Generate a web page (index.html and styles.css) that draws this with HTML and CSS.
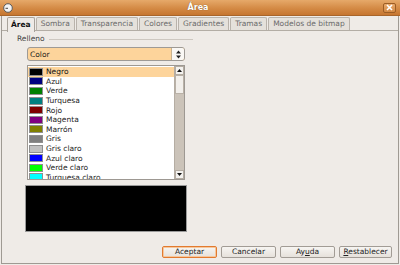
FILE: index.html
```html
<!DOCTYPE html>
<html>
<head>
<meta charset="utf-8">
<link rel="stylesheet" href="styles.css">
</head>
<body>
<div class="window">
  <div class="titlebar">
    <span class="ticon">
      <svg width="10" height="10" viewBox="0 0 10 10"><circle cx="5" cy="5" r="4.3" fill="#f4f4f4" stroke="#5a5a5a" stroke-width="1"/><path d="M2.5 5.3 L5 5.3" stroke="#444" stroke-width="1"/></svg>
    </span>
    <span class="title">Área</span>
    <span class="close">
      <svg width="7" height="7" viewBox="0 0 7 7"><path d="M1 1 L6 6 M6 1 L1 6" stroke="#fff" stroke-width="1.6"/></svg>
    </span>
  </div>
  <div class="frame">
    <div class="tabs">
      <span class="tab active">Área</span>
      <span class="tab">Sombra</span>
      <span class="tab">Transparencia</span>
      <span class="tab">Colores</span>
      <span class="tab">Gradientes</span>
      <span class="tab">Tramas</span>
      <span class="tab">Modelos de bitmap</span>
    </div>
    <div class="page">
      <div class="section-head"><span class="label">Relleno</span><span class="rule"></span></div>
      <div class="combo">
        <span class="combo-text">Color</span>
        <span class="spin">
          <svg width="5" height="9" viewBox="0 0 5 9"><path d="M2.5 0.5 L5 3.5 L0 3.5 Z M0 5.5 L5 5.5 L2.5 8.5 Z" fill="#222"/></svg>
        </span>
      </div>
      <div class="listbox">
        <div class="rows">
          <div class="row sel"><span class="sw" style="background:#000000"></span>Negro</div>
          <div class="row"><span class="sw" style="background:#000080"></span>Azul</div>
          <div class="row"><span class="sw" style="background:#008000"></span>Verde</div>
          <div class="row"><span class="sw" style="background:#008080"></span>Turquesa</div>
          <div class="row"><span class="sw" style="background:#800000"></span>Rojo</div>
          <div class="row"><span class="sw" style="background:#800080"></span>Magenta</div>
          <div class="row"><span class="sw" style="background:#808000"></span>Marrón</div>
          <div class="row"><span class="sw" style="background:#808080"></span>Gris</div>
          <div class="row"><span class="sw" style="background:#c0c0c0"></span>Gris claro</div>
          <div class="row"><span class="sw" style="background:#0000ff"></span>Azul claro</div>
          <div class="row"><span class="sw" style="background:#00ff00"></span>Verde claro</div>
          <div class="row"><span class="sw" style="background:#00ffff"></span>Turquesa claro</div>
        </div>
        <div class="scrollbar">
          <span class="sbtn"><svg width="5" height="3" viewBox="0 0 5 3"><path d="M2.5 0 L5 3 L0 3 Z" fill="#111"/></svg></span>
          <span class="thumb"></span>
          <span class="track"></span>
          <span class="sbtn"><svg width="5" height="3" viewBox="0 0 5 3"><path d="M0 0 L5 0 L2.5 3 Z" fill="#111"/></svg></span>
        </div>
      </div>
      <div class="preview"></div>
    </div>
    <div class="buttons">
      <span class="btn focus">Aceptar</span>
      <span class="btn">Cancelar</span>
      <span class="btn">Ay<u>u</u>da</span>
      <span class="btn"><u>R</u>establecer</span>
    </div>
  </div>
</div>
</body>
</html>
```

FILE: styles.css
```css
html, body {
  margin: 0;
  padding: 0;
  background: #efebe7;
}
body {
  width: 400px;
  height: 265px;
  overflow: hidden;
  font-family: "DejaVu Sans", sans-serif;
  font-size: 7.5px;
  color: #1a1a1a;
}
.window {
  width: 400px;
  height: 265px;
  display: flex;
  flex-direction: column;
}
.titlebar {
  height: 16px;
  flex: none;
  display: flex;
  align-items: center;
  background: linear-gradient(#e6a96a, #d48a45 55%, #c67630);
  border-bottom: 1px solid #a8652a;
  box-sizing: border-box;
  padding: 0 3px;
}
.ticon {
  width: 10px;
  height: 10px;
  display: flex;
}
.title {
  flex: 1;
  text-align: center;
  font-weight: bold;
  font-size: 8px;
  color: #ffffff;
  text-shadow: 0 0 1px #6b3a10;
}
.close {
  width: 13px;
  height: 10px;
  margin-right: 1px;
  border: 1px solid #9c5d24;
  border-radius: 2px;
  background: linear-gradient(#e9aa6c, #d38944);
  display: flex;
  align-items: center;
  justify-content: center;
  box-sizing: border-box;
}
.frame {
  flex: 1;
  margin: 0 1px 1px 1px;
  border: 1px solid #9f9a93;
  border-top: none;
  display: flex;
  flex-direction: column;
}
.tabs {
  display: flex;
  gap: 1px;
  padding: 1px 0 0 5px;
  height: 13px;
  align-items: flex-end;
}
.tab {
  height: 13px;
  line-height: 12px;
  padding: 0 4px;
  border: 1px solid #b9b3ab;
  border-bottom: none;
  border-radius: 2px 2px 0 0;
  background: #e5e1db;
  color: #6a6a6a;
  box-sizing: border-box;
  white-space: nowrap;
}
.tab.active {
  height: 15px;
  margin-bottom: -2px;
  margin-top: -2px;
  padding: 0 3px;
  background: #efebe7;
  color: #111;
  font-weight: bold;
  border-color: #a9a39b;
  position: relative;
  z-index: 1;
  line-height: 13px;
}
.page {
  border-top: 1px solid #b3ada5;
  padding: 2px 0 0 15px;
  flex: 1;
}
.section-head {
  display: flex;
  align-items: center;
  width: 176px;
  height: 10px;
  color: #444;
}
.rule {
  flex: 1;
  height: 1px;
  background: #cdc7c0;
  margin-left: 4px;
  margin-top: 2px;
}
.combo {
  margin: 4px 0 0 10px;
  width: 158px;
  height: 14px;
  box-sizing: border-box;
  border: 1px solid #9e9a95;
  border-radius: 3px;
  background: #fdd49b;
  display: flex;
  align-items: center;
}
.combo-text {
  flex: 1;
  padding-left: 2px;
  color: #1a1a1a;
}
.spin {
  width: 13px;
  height: 12px;
  border-left: 1px solid #c9b28e;
  background: #faf8f5;
  border-radius: 0 2px 2px 0;
  display: flex;
  align-items: center;
  justify-content: center;
  box-sizing: border-box;
}
.listbox {
  margin: 4px 0 0 10px;
  width: 158px;
  height: 115px;
  box-sizing: border-box;
  border: 1px solid #9d9892;
  background: #ffffff;
  display: flex;
  overflow: hidden;
}
.rows {
  flex: 1;
  padding-top: 1px;
  overflow: hidden;
}
.row {
  height: 9.6px;
  display: flex;
  align-items: center;
  white-space: nowrap;
  color: #222;
}
.row.sel {
  background: #fdd49b;
  color: #111;
}
.sw {
  width: 14px;
  height: 8px;
  box-sizing: border-box;
  border: 1px solid #8f8f8f;
  margin: 0 3px 0 1px;
  flex: none;
}
.scrollbar {
  width: 9px;
  display: flex;
  flex-direction: column;
  background: #cbc3b9;
  border-left: 1px solid #b5ada3;
  flex: none;
}
.sbtn {
  height: 9px;
  flex: none;
  background: #f4f2ef;
  border: 1px solid #b4aca2;
  box-sizing: border-box;
  display: flex;
  align-items: center;
  justify-content: center;
}
.thumb {
  height: 19px;
  flex: none;
  background-color: #f2efeb;
  background-image: radial-gradient(#c4bcb2 0.6px, transparent 0.7px);
  background-size: 2px 2px;
  background-position: 1px 1px;
  border: 1px solid #b9b1a7;
  box-sizing: border-box;
}
.track {
  flex: 1;
}
.preview {
  margin: 5px 0 0 8px;
  width: 162px;
  height: 47px;
  box-sizing: border-box;
  border: 1px solid #9a9a9a;
  background: #000000;
}
.buttons {
  display: flex;
  justify-content: flex-end;
  gap: 4px;
  padding: 0 6px 5px 0;
}
.btn {
  width: 55px;
  height: 12px;
  box-sizing: border-box;
  border: 1px solid #a29c95;
  border-radius: 2px;
  background: linear-gradient(#f7f5f2, #e6e1db);
  text-align: center;
  line-height: 10px;
  color: #222;
}
.btn.focus {
  border-color: #e27a2f;
  box-shadow: inset 0 0 0 1px #f6c79c;
}
.btn:last-child {
  width: 53px;
}
u {
  text-decoration-thickness: 1px;
  text-underline-offset: 1px;
}
```
